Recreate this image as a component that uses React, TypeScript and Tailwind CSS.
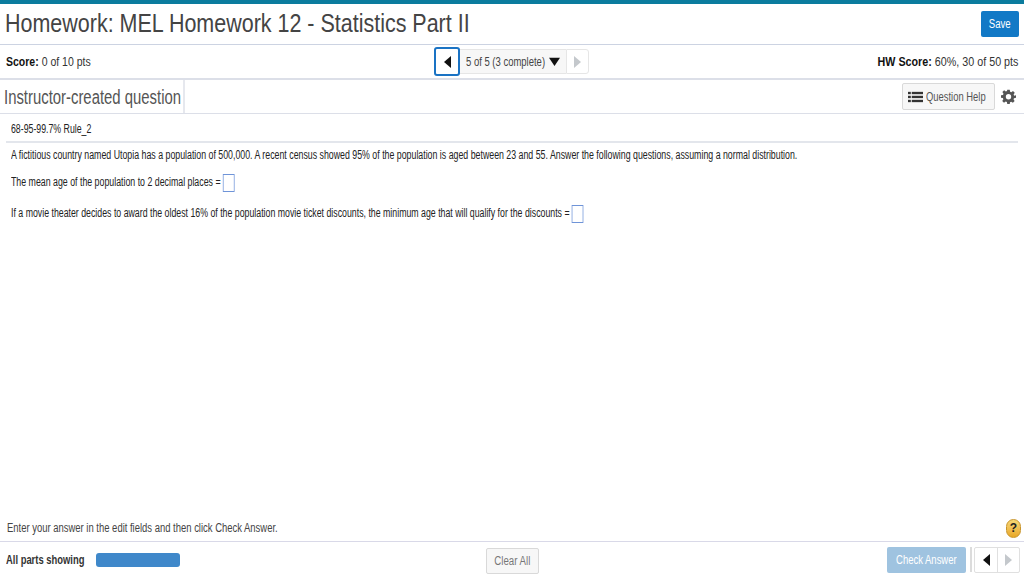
import React from 'react'

const font = { fontFamily: '"Liberation Sans", Arial, sans-serif' }

const Tri = ({ dir, color, size = 12 }: { dir: 'left' | 'right' | 'down'; color: string; size?: number }) => {
  const pts = dir === 'left' ? '8,0 8,12 1,6' : dir === 'right' ? '1,0 1,12 8,6' : '0,2 12,2 6,11'
  const vb = dir === 'down' ? '0 0 12 12' : '0 0 9 12'
  return (
    <svg className="shrink-0" width={dir === 'down' ? size : (size * 3) / 4} height={size} viewBox={vb}>
      <polygon points={pts} fill={color} />
    </svg>
  )
}

const Gear = () => (
  <svg width="15" height="15" viewBox="0 0 24 24">
    <path
      fill="#555"
      fillRule="evenodd"
      d="M10 1h4l.6 3.2 1.9.8 2.7-1.8 2.8 2.8-1.8 2.7.8 1.9L24 10v4l-3.2.6-.8 1.9 1.8 2.7-2.8 2.8-2.7-1.8-1.9.8L14 24h-4l-.6-3.2-1.9-.8-2.7 1.8L2 19l1.8-2.7-.8-1.9L0 14v-4l3.2-.6.8-1.9L2.2 4.8 5 2l2.7 1.8 1.900-.8zM12 8a4.300 4.300 0 1 0 0 8.600A4.300 4.300 0 0 0 12 8z"
    />
  </svg>
)

const ListIcon = () => (
  <svg className="shrink-0" width="15" height="12" viewBox="0 0 16 12">
    <g fill="#333">
      <rect x="0" y="0.500" width="3" height="2.500" />
      <rect x="4" y="0.500" width="12" height="2.500" />
      <rect x="0" y="4.700" width="3" height="2.500" />
      <rect x="4" y="4.700" width="12" height="2.500" />
      <rect x="0" y="9" width="3" height="2.500" />
      <rect x="4" y="9" width="12" height="2.500" />
    </g>
  </svg>
)

// the whole reference is squeezed horizontally, the body text the most
const AnswerBox = () => <span className="inline-block w-[16px] h-[18px] border border-[#6f94d8] bg-white ml-[3px] align-middle" />

export default function App() {
  return (
    <div className="w-[1024px] h-[576px] bg-white flex flex-col overflow-hidden text-[#333]" style={font}>
      <div className="h-[4px] bg-[#0b7c9e] shrink-0" />

      <div className="h-[41px] shrink-0 flex items-center justify-between pl-[5px] pr-[5px] pb-[2px] border-b border-[#ccd3e2]">
        <h1 className="text-[26px] text-[#444] leading-none whitespace-nowrap origin-left scale-x-[0.826]">Homework: MEL Homework 12 - Statistics Part II</h1>
        <button className="w-[38px] h-[26px] mt-[2px] bg-[#1279c6] rounded-[2px] text-white text-[12px] flex items-center justify-center">
          <span className="shrink-0 scale-x-[0.8]">Save</span>
        </button>
      </div>

      <div className="h-[35px] shrink-0 flex items-center justify-between pl-[6px] pr-[6px] pt-[1px] border-b-2 border-[#dcdfe8] relative">
        <div className="text-[12px] text-[#333] whitespace-nowrap origin-left scale-x-[0.876]">
          <b className="text-[#111]">Score:</b> 0 of 10 pts
        </div>
        <div className="absolute left-[434px] top-[2px] flex items-center h-[29px]">
          <div className="w-[26px] h-[29px] border-2 border-[#1a73c4] rounded-[3px] flex items-center justify-center bg-white">
            <Tri dir="left" color="#111" />
          </div>
          <div className="h-[25px] w-[106px] bg-[#f7f7f7] border-y border-[#e6e6e6] flex items-center pl-[6px] text-[12px] text-[#444] whitespace-nowrap">
            <span className="w-[83px] shrink-0 origin-left scale-x-[0.79]">5 of 5 (3 complete)</span>
            <Tri dir="down" color="#111" size={11} />
          </div>
          <div className="w-[23px] h-[25px] border border-[#e6e6e6] rounded-r-[3px] flex items-center justify-center bg-white">
            <Tri dir="right" color="#c4c8cc" />
          </div>
        </div>
        <div className="text-[12px] text-[#333] whitespace-nowrap origin-right scale-x-[0.895]">
          <b className="text-[#111]">HW Score:</b> 60%, 30 of 50 pts
        </div>
      </div>

      <div className="h-[34px] shrink-0 flex items-center justify-between border-b border-[#dcdfe8]">
        <div className="w-[185px] h-full flex items-center pl-[4px] border-r-2 border-[#e6e8ee]">
          <span className="text-[20px] text-[#555] leading-none whitespace-nowrap shrink-0 origin-left scale-x-[0.744]">Instructor-created question</span>
        </div>
        <div className="flex items-center pr-[8px] gap-[6px]">
          <button className="w-[93px] h-[27px] bg-[#f7f7f7] border border-[#d9d9d9] rounded-[2px] flex items-center pl-[5px] gap-[3px] text-[12px] text-[#555]">
            <ListIcon />
            <span className="w-[60px] shrink-0 text-left whitespace-nowrap origin-left scale-x-[0.784]">Question Help</span>
          </button>
          <Gear />
        </div>
      </div>

      <div className="flex-1 px-[6px] text-[12px] text-[#222]">
        <div className="pl-[5px] pt-[2px] h-[29px] flex items-center border-b-2 border-[#e3e6ec]">
          <span className="whitespace-nowrap origin-left scale-x-[0.73]">68-95-99.7% Rule_2</span>
        </div>
        <p className="ml-[5px] mt-[3px] leading-[18px] whitespace-nowrap origin-left scale-x-[0.733]">
          A fictitious country named Utopia has a population of 500,000. A recent census showed 95% of the population is aged between 23 and 55. Answer the following questions, assuming a normal distribution.
        </p>
        <p className="ml-[5px] mt-[9px] leading-[18px] whitespace-nowrap origin-left scale-x-[0.733]">
          The mean age of the population to 2 decimal places =<AnswerBox />
        </p>
        <p className="ml-[5px] mt-[12px] leading-[18px] whitespace-nowrap origin-left scale-x-[0.731]">
          If a movie theater decides to award the oldest 16% of the population movie ticket discounts, the minimum age that will qualify for the discounts =<AnswerBox />
        </p>
      </div>

      <div className="h-[27px] shrink-0 flex items-center justify-between pl-[7px] pr-[3px] border-b border-[#d9d9e8]">
        <span className="text-[12px] text-[#444] whitespace-nowrap origin-left scale-x-[0.788]">Enter your answer in the edit fields and then click Check Answer.</span>
        <span className="w-[15px] h-[19px] rounded-full bg-linear-to-b from-[#f7d774] to-[#e8a825] border border-[#c9952a] flex items-center justify-center text-[12px] font-bold text-[#222]">?</span>
      </div>

      <div className="h-[34px] shrink-0 flex items-center pl-[6px] pr-[4px] pt-[1px] relative">
        <span className="w-[79px] shrink-0 text-[12px] font-bold text-[#333] whitespace-nowrap origin-left scale-x-[0.784]">All parts showing</span>
        <div className="ml-[11px] w-[84px] h-[14px] bg-[#3f88ca] rounded-[3px]" />
        <button className="absolute left-[486px] top-[6px] w-[53px] h-[26px] bg-[#f7f7f7] border border-[#d9d9d9] rounded-[2px] text-[12px] text-[#777] flex items-center justify-center">
          <span className="shrink-0 whitespace-nowrap scale-x-[0.807]">Clear All</span>
        </button>
        <div className="ml-auto flex items-center">
          <button className="w-[79px] h-[26px] bg-[#9fc3e0] rounded-[2px] text-white text-[12px] flex items-center justify-center">
            <span className="shrink-0 whitespace-nowrap scale-x-[0.79]">Check Answer</span>
          </button>
          <div className="w-[2px] h-[25px] bg-[#dcdcdc] ml-[4px] mr-[2px]" />
          <div className="flex w-[46px] h-[26px] border border-[#e0e0e0] rounded-[2px]">
            <div className="w-[23px] flex items-center justify-center border-r border-[#e0e0e0]">
              <Tri dir="left" color="#111" />
            </div>
            <div className="flex-1 flex items-center justify-center">
              <Tri dir="right" color="#c4c8cc" />
            </div>
          </div>
        </div>
      </div>
    </div>
  )
}
